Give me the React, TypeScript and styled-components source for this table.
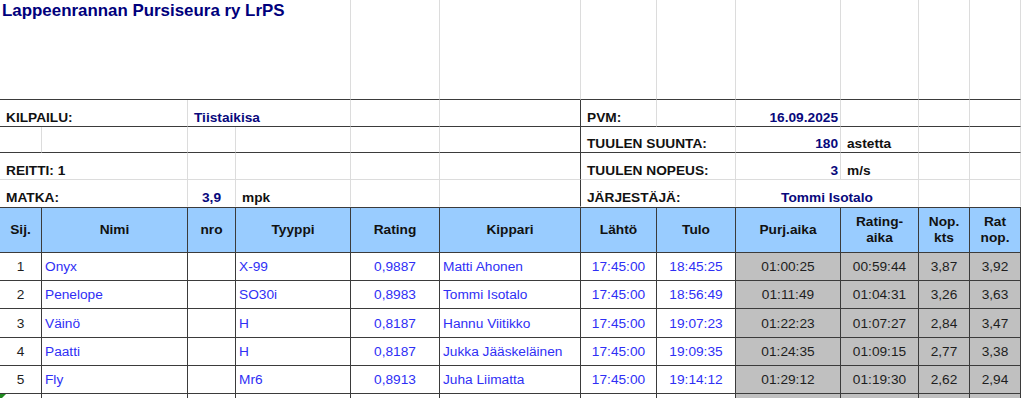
import React from 'react';
import styled, { createGlobalStyle, css } from 'styled-components';

type Line = 'dark' | 'light' | 'none';
type Align = 'left' | 'center' | 'right';

const GlobalStyle = createGlobalStyle`
  html, body {
    margin: 0;
    padding: 0;
    background: #ffffff;
  }
  body {
    font-family: "Liberation Sans", Arial, sans-serif;
    overflow: hidden;
    width: 1024px;
    height: 398px;
  }
`;

// sarakkeiden leveydet (px), viimeinen rivi loppuu 1021px kohdalla
const colWidths = [42, 146, 48, 115, 89, 141, 76, 79, 105, 78, 51, 51];

const lineColor = (l?: Line) =>
  l === 'dark' ? '#3b3b3b' : l === 'none' ? 'transparent' : '#dcdcdc';

const Sheet = styled.table`
  border-collapse: separate;
  border-spacing: 0;
  table-layout: fixed;
  width: 1021px;
  font-size: 13.7px;
  color: #111111;
`;

const Col = styled.col<{ $w: number }>`
  width: ${(p) => p.$w}px;
`;

const Row = styled.tr<{ $h: number }>`
  height: ${(p) => p.$h}px;
`;

const TitleCell = styled.td`
  box-sizing: border-box;
  vertical-align: top;
  padding: 2px 0 0 2px;
  border-right: 1px solid ${lineColor('light')};
  border-bottom: 1px solid ${lineColor('dark')};
  color: #00007c;
  font-size: 16.9px;
  font-weight: bold;
  line-height: 18px;
  white-space: nowrap;
`;

const InfoCell = styled.td<{
  $r?: Line;
  $b?: Line;
  $align?: Align;
  $value?: boolean;
}>`
  box-sizing: border-box;
  vertical-align: bottom;
  padding: 0 ${(p) => (p.$align === 'right' ? '2px' : '6px')} 0
    ${(p) => (p.$align === 'right' ? '2px' : '6px')};
  border-right: 1px solid ${(p) => lineColor(p.$r ?? 'light')};
  border-bottom: 1px solid ${(p) => lineColor(p.$b ?? 'light')};
  text-align: ${(p) => p.$align ?? 'left'};
  font-weight: bold;
  line-height: 17px;
  white-space: nowrap;
  color: ${(p) => (p.$value ? '#08087c' : '#111111')};
`;

const HeadCell = styled.th`
  box-sizing: border-box;
  background: #99ccff;
  border-top: 1px solid ${lineColor('dark')};
  border-right: 1px solid ${lineColor('dark')};
  border-bottom: 1px solid ${lineColor('dark')};
  text-align: center;
  vertical-align: middle;
  font-weight: bold;
  line-height: 16px;
  padding: 0 2px;
  color: #111111;
`;

const DataCell = styled.td<{ $align?: Align; $kind?: 'num' | 'link' | 'calc'; $flag?: boolean }>`
  box-sizing: border-box;
  position: relative;
  border-right: 1px solid ${lineColor('dark')};
  border-bottom: 1px solid ${lineColor('dark')};
  text-align: ${(p) => p.$align ?? 'left'};
  vertical-align: middle;
  padding: 0 3px;
  white-space: nowrap;
  line-height: 17px;
  color: ${(p) => (p.$kind === 'link' ? '#2f2ff5' : '#1e1e1e')};
  ${(p) =>
    p.$kind === 'calc' &&
    css`
      background: #c0c0c0;
    `}
  ${(p) =>
    p.$flag &&
    css`
      &::before {
        content: '';
        position: absolute;
        left: 0;
        top: 0;
        border-top: 6px solid #1f8a1f;
        border-right: 6px solid transparent;
      }
    `}
`;

type Result = {
  sij: string;
  nimi: string;
  tyyppi: string;
  rating: string;
  kippari: string;
  lahto: string;
  tulo: string;
  purj: string;
  ratingAika: string;
  nop: string;
  ratNop: string;
  h: number;
};

const results: Result[] = [
  { sij: '1', nimi: 'Onyx', tyyppi: 'X-99', rating: '0,9887', kippari: 'Matti Ahonen', lahto: '17:45:00', tulo: '18:45:25', purj: '01:00:25', ratingAika: '00:59:44', nop: '3,87', ratNop: '3,92', h: 28 },
  { sij: '2', nimi: 'Penelope', tyyppi: 'SO30i', rating: '0,8983', kippari: 'Tommi Isotalo', lahto: '17:45:00', tulo: '18:56:49', purj: '01:11:49', ratingAika: '01:04:31', nop: '3,26', ratNop: '3,63', h: 28 },
  { sij: '3', nimi: 'Väinö', tyyppi: 'H', rating: '0,8187', kippari: 'Hannu Viitikko', lahto: '17:45:00', tulo: '19:07:23', purj: '01:22:23', ratingAika: '01:07:27', nop: '2,84', ratNop: '3,47', h: 29 },
  { sij: '4', nimi: 'Paatti', tyyppi: 'H', rating: '0,8187', kippari: 'Jukka Jääskeläinen', lahto: '17:45:00', tulo: '19:09:35', purj: '01:24:35', ratingAika: '01:09:15', nop: '2,77', ratNop: '3,38', h: 28 },
  { sij: '5', nimi: 'Fly', tyyppi: 'Mr6', rating: '0,8913', kippari: 'Juha Liimatta', lahto: '17:45:00', tulo: '19:14:12', purj: '01:29:12', ratingAika: '01:19:30', nop: '2,62', ratNop: '2,94', h: 28 },
];

const Empty = ({ r, b }: { r?: Line; b?: Line }) => <InfoCell $r={r} $b={b} />;

const App: React.FC = () => {
  return (
    <>
      <GlobalStyle />
      <Sheet>
        <colgroup>
          {colWidths.map((w, i) => (
            <Col key={i} $w={w} />
          ))}
        </colgroup>
        <tbody>
          {/* otsikko */}
          <Row $h={100}>
            <TitleCell colSpan={4}>Lappeenrannan Pursiseura ry LrPS</TitleCell>
            {colWidths.slice(4).map((_, i) => (
              <InfoCell key={i} $b="dark" />
            ))}
          </Row>

          {/* kilpailun tiedot */}
          <Row $h={27}>
            <InfoCell colSpan={2} $b="dark">KILPAILU:</InfoCell>
            <InfoCell colSpan={2} $b="dark" $value>
              Tiistaikisa
            </InfoCell>
            <Empty b="dark" />
            <Empty b="dark" r="dark" />
            <InfoCell $b="dark">PVM:</InfoCell>
            <Empty b="dark" />
            <InfoCell $b="dark" $align="right" $value>
              16.09.2025
            </InfoCell>
            <Empty b="dark" />
            <Empty b="dark" />
            <Empty b="dark" />
          </Row>
          <Row $h={26}>
            <Empty b="dark" />
            <Empty b="dark" />
            <Empty b="dark" />
            <Empty b="dark" />
            <Empty b="dark" />
            <Empty b="dark" r="dark" />
            <InfoCell colSpan={2} $b="dark">TUULEN SUUNTA:</InfoCell>
            <InfoCell $b="dark" $align="right" $value>
              180
            </InfoCell>
            <InfoCell $b="dark">astetta</InfoCell>
            <Empty b="dark" />
            <Empty b="dark" />
          </Row>
          <Row $h={27}>
            <InfoCell colSpan={2}>REITTI: 1</InfoCell>
            <Empty />
            <Empty />
            <Empty />
            <Empty r="dark" />
            <InfoCell colSpan={2}>TUULEN NOPEUS:</InfoCell>
            <InfoCell $align="right" $value>
              3
            </InfoCell>
            <InfoCell>m/s</InfoCell>
            <Empty />
            <Empty />
          </Row>
          <Row $h={27}>
            <InfoCell colSpan={2} $b="none">MATKA:</InfoCell>
            <InfoCell $b="none" $align="center" $value>
              3,9
            </InfoCell>
            <InfoCell $b="none">mpk</InfoCell>
            <Empty b="none" />
            <Empty b="none" r="dark" />
            <InfoCell colSpan={2} $b="none">JÄRJESTÄJÄ:</InfoCell>
            <InfoCell colSpan={2} $b="none" $align="center" $value>
              Tommi Isotalo
            </InfoCell>
            <Empty b="none" />
            <Empty b="none" />
          </Row>

          {/* tulostaulukko */}
          <Row $h={46}>
            <HeadCell>Sij.</HeadCell>
            <HeadCell>Nimi</HeadCell>
            <HeadCell>nro</HeadCell>
            <HeadCell>Tyyppi</HeadCell>
            <HeadCell>Rating</HeadCell>
            <HeadCell>Kippari</HeadCell>
            <HeadCell>Lähtö</HeadCell>
            <HeadCell>Tulo</HeadCell>
            <HeadCell>Purj.aika</HeadCell>
            <HeadCell>
              Rating-
              <br />
              aika
            </HeadCell>
            <HeadCell>
              Nop.
              <br />
              kts
            </HeadCell>
            <HeadCell>
              Rat
              <br />
              nop.
            </HeadCell>
          </Row>
          {results.map((r) => (
            <Row key={r.sij} $h={r.h}>
              <DataCell $align="center">{r.sij}</DataCell>
              <DataCell $kind="link">{r.nimi}</DataCell>
              <DataCell />
              <DataCell $kind="link">{r.tyyppi}</DataCell>
              <DataCell $kind="link" $align="center">
                {r.rating}
              </DataCell>
              <DataCell $kind="link">{r.kippari}</DataCell>
              <DataCell $kind="link" $align="center">
                {r.lahto}
              </DataCell>
              <DataCell $kind="link" $align="center">
                {r.tulo}
              </DataCell>
              <DataCell $kind="calc" $align="center">
                {r.purj}
              </DataCell>
              <DataCell $kind="calc" $align="center">
                {r.ratingAika}
              </DataCell>
              <DataCell $kind="calc" $align="center">
                {r.nop}
              </DataCell>
              <DataCell $kind="calc" $align="center">
                {r.ratNop}
              </DataCell>
            </Row>
          ))}
          <Row $h={28}>
            <DataCell $flag />
            <DataCell />
            <DataCell />
            <DataCell />
            <DataCell />
            <DataCell />
            <DataCell />
            <DataCell />
            <DataCell $kind="calc" />
            <DataCell $kind="calc" />
            <DataCell $kind="calc" />
            <DataCell $kind="calc" />
          </Row>
        </tbody>
      </Sheet>
    </>
  );
};

export default App;
